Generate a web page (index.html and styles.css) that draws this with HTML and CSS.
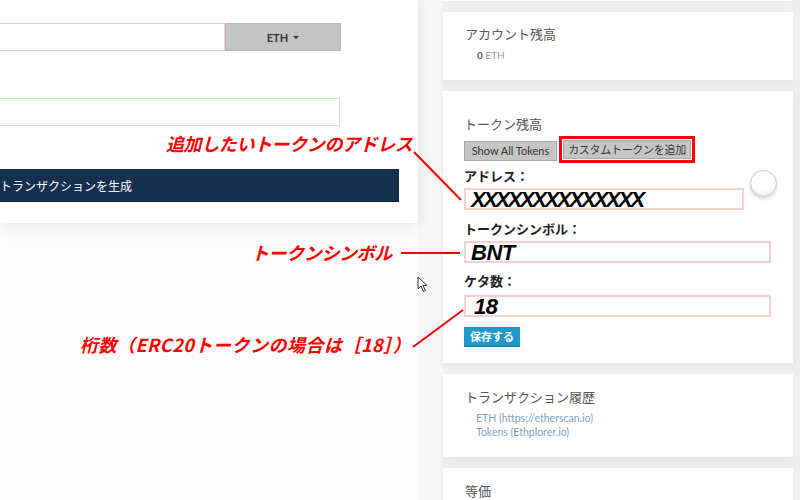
FILE: index.html
```html
<!DOCTYPE html>
<html lang="ja">
<head>
  <meta charset="UTF-8" />
  <title>トークン追加</title>
  <link rel="stylesheet" href="styles.css">
</head>
<body>
  <div class="page">
    <!-- Send form (left, cropped) -->
    <div class="left-col">
      <div class="send-card">
        <div class="amount-row">
          <div class="amount-input"></div>
          <div class="unit-btn">ETH <span class="caret"></span></div>
        </div>
        <div class="addr-input"></div>
        <div class="gen-btn">トランザクションを生成</div>
      </div>
    </div>

    <!-- Sidebar -->
    <div class="right-col">
      <div class="card sliver"></div>

      <div class="card balance-card">
        <div class="card-title">アカウント残高</div>
        <div class="balance"><b>0</b> ETH</div>
      </div>

      <div class="card token-card">
        <div class="card-title">トークン残高</div>
        <div class="token-btns">
          <button type="button" class="gray-btn show-all">Show All Tokens</button>
          <div class="mark-box">
            <button type="button" class="gray-btn">カスタムトークンを追加</button>
          </div>
        </div>
        <label class="field-label">アドレス：</label>
        <div class="field field-short">XXXXXXXXXXXXXX</div>
        <label class="field-label label-2">トークンシンボル：</label>
        <div class="field">BNT</div>
        <label class="field-label label-3">ケタ数：</label>
        <div class="field field-num">18</div>
        <button type="button" class="save-btn">保存する</button>
        <div class="loader"></div>
      </div>

      <div class="card history-card">
        <div class="card-title">トランザクション履歴</div>
        <div class="links">
          <a>ETH (https://etherscan.io)</a>
          <a>Tokens (Ethplorer.io)</a>
        </div>
      </div>

      <div class="card equiv-card">
        <div class="card-title">等価</div>
      </div>
    </div>
    <div class="edge"></div>
  </div>

  <!-- Annotations -->
  <div class="note note-addr">追加したいトークンのアドレス</div>
  <div class="note note-symbol">トークンシンボル</div>
  <div class="note note-decimals">桁数（ERC20トークンの場合は［18］）</div>
  <svg class="note-lines" width="800" height="500" viewBox="0 0 800 500">
    <line x1="414" y1="152" x2="461" y2="200" />
    <line x1="401" y1="253" x2="460" y2="253" />
    <line x1="413" y1="347" x2="463" y2="310" />
  </svg>
  <svg class="cursor" width="12" height="17" viewBox="0 0 12 17">
    <path d="M1 1 L1 13 L4 10 L6.5 15.5 L8.5 14.5 L6 9.5 L10 9.5 Z" />
  </svg>
</body>
</html>
```

FILE: styles.css
```css
body {
  margin: 0;
  width: 800px;
  height: 500px;
  overflow: hidden;
  background: #f6f6f6;
  font-family: Lato, "Noto Sans CJK JP", sans-serif;
  position: relative;
}
.page {
  display: flex;
  height: 500px;
}

/* left send form */
.left-col {
  width: 418px;
  background: #fbfbfb;
}
.send-card {
  height: 223px;
  box-sizing: border-box;
  padding-top: 23px;
  background: #fff;
  box-shadow: 0 5px 16px rgba(0, 0, 0, 0.08);
}
.amount-row {
  display: flex;
  width: 341px;
  height: 28px;
}
.amount-input {
  width: 225px;
  border: 1px solid #f2c8c8;
  border-left: none;
  box-sizing: border-box;
}
.unit-btn {
  flex: 1;
  background: #c4c4c4;
  border: 1px solid #b8b8b8;
  display: flex;
  align-items: center;
  justify-content: center;
  gap: 5px;
  font-size: 11px;
  font-weight: bold;
  color: #333;
}
.caret {
  width: 0;
  height: 0;
  border-left: 3px solid transparent;
  border-right: 3px solid transparent;
  border-top: 3px solid #333;
}
.addr-input {
  margin-top: 47px;
  width: 340px;
  height: 28px;
  box-sizing: border-box;
  border: 1px solid #cbe6c7;
  border-left: none;
}
.gen-btn {
  margin-top: 43px;
  width: 399px;
  height: 33px;
  background: #172f4f;
  border-bottom: 1px solid #0e2038;
  box-sizing: border-box;
  color: #fff;
  font-family: "Noto Sans CJK JP", sans-serif;
  font-size: 12px;
  display: flex;
  align-items: center;
}

/* sidebar */
.right-col {
  margin-left: 25px;
  width: 350px;
  display: flex;
  flex-direction: column;
  gap: 11px;
  background: #f0f0f0;
}
.edge {
  flex: 1;
  background: #efefef;
}
.card {
  background: #fff;
  box-sizing: border-box;
  padding: 0 22px;
  box-shadow: 0 3px 8px rgba(0, 0, 0, 0.05);
}
.sliver {
  height: 1px;
}
.card-title {
  font-family: "Noto Sans CJK JP", sans-serif;
  font-size: 13px;
  line-height: 18px;
  color: #555;
}
.balance-card {
  height: 68px;
  padding-top: 13px;
}
.balance {
  margin-top: 5px;
  padding-left: 12px;
  font-size: 10px;
  line-height: 14px;
  color: #999;
}
.balance b {
  color: #555;
}

.token-card {
  height: 274px;
  padding-top: 24px;
  padding-left: 21px;
  position: relative;
}
.token-btns {
  margin-top: 3px;
  display: flex;
  align-items: flex-end;
  gap: 2px;
}
.gray-btn {
  height: 19px;
  padding: 0 2px;
  border: 1px solid #a9a9a9;
  background: #c6c6c6;
  color: #333;
  font-family: Lato, "Noto Sans CJK JP", sans-serif;
  font-size: 11px;
  line-height: 17px;
  white-space: nowrap;
  display: block;
}
.show-all {
  height: 20px;
  width: 93px;
  margin-bottom: 2px;
  padding: 0;
}
.mark-box {
  border: 3px solid #f00;
  padding: 1px;
}
.mark-box .gray-btn {
  width: 128px;
  letter-spacing: -0.3px;
}
.field-label {
  display: block;
  margin-top: 4px;
  font-family: "Noto Sans CJK JP", sans-serif;
  font-size: 13px;
  font-weight: bold;
  line-height: 18px;
  color: #222;
}
.label-2 {
  margin-top: 10px;
}
.label-3 {
  margin-top: 9px;
}
.field {
  margin-top: 3px;
  width: 307px;
  height: 22px;
  box-sizing: border-box;
  border: 2px solid #f3d0d0;
  padding-left: 5px;
  font-family: "Liberation Sans", Arial, sans-serif;
  font-size: 22px;
  font-weight: bold;
  font-style: italic;
  line-height: 20px;
  color: #000;
  letter-spacing: -0.5px;
}
.field-short {
  width: 280px;
  letter-spacing: -2.4px;
}
.field-num {
  margin-top: 5px;
  padding-left: 8px;
}
.save-btn {
  margin-top: 10px;
  display: block;
  width: 56px;
  height: 20px;
  border: none;
  border-bottom: 1px solid #137aa3;
  background: #1d9bc8;
  color: #fff;
  font-family: "Noto Sans CJK JP", sans-serif;
  font-size: 11px;
  font-weight: bold;
  padding: 0;
}
.loader {
  position: absolute;
  left: 307px;
  top: 79px;
  width: 25px;
  height: 25px;
  border-radius: 50%;
  border: 1px solid #c8c8c8;
  background: radial-gradient(circle at 45% 35%, #fff 45%, #e4e4e4 100%);
  box-shadow: 0 2px 3px rgba(0, 0, 0, 0.15);
}

.history-card {
  height: 83px;
  padding-top: 14px;
}
.links {
  margin-top: 5px;
  padding-left: 11px;
  display: flex;
  flex-direction: column;
}
.links a {
  font-size: 10.5px;
  line-height: 14px;
  color: #7ea5bf;
}
.equiv-card {
  flex: 1;
  padding-top: 14px;
}

/* annotations */
.note {
  position: absolute;
  font-family: "Noto Sans CJK JP", sans-serif;
  font-size: 18px;
  font-weight: bold;
  font-style: italic;
  line-height: 20px;
  color: #f00;
  white-space: nowrap;
  letter-spacing: -0.4px;
}
.note-addr {
  left: 166px;
  top: 133px;
}
.note-symbol {
  left: 251px;
  top: 242px;
}
.note-decimals {
  left: 80px;
  top: 334px;
  letter-spacing: 0.5px;
}
.note-lines {
  position: absolute;
  left: 0;
  top: 0;
  pointer-events: none;
}
.note-lines line {
  stroke: #f00;
  stroke-width: 2;
}
.cursor {
  position: absolute;
  left: 417px;
  top: 276px;
}
.cursor path {
  fill: #fff;
  stroke: #333;
  stroke-width: 1;
}
```
